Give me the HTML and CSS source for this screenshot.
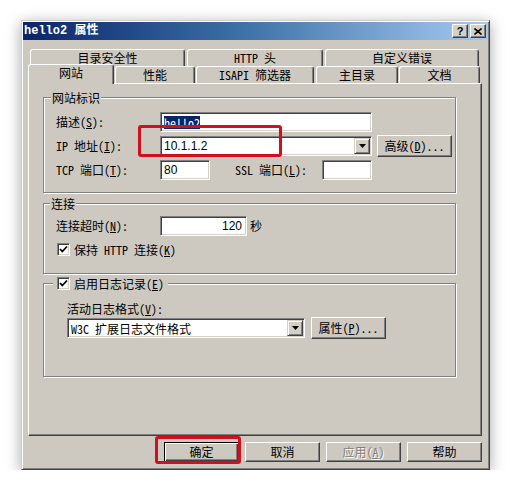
FILE: index.html
```html
<!DOCTYPE html>
<html lang="zh-CN">
<head>
<meta charset="utf-8">
<title>hello2 属性</title>
<link rel="stylesheet" href="styles.css">
</head>
<body>
<div class="win">
  <div class="titlebar">
    <span class="title-text">hello2 属性</span>
    <div class="caps">
      <span class="cap cap-help">?</span>
      <span class="cap cap-close"><svg width="8" height="7" viewBox="0 0 8 7"><path d="M0.5 0.5 L7.5 6.5 M7.5 0.5 L0.5 6.5" stroke="#000" stroke-width="1.6"/></svg></span>
    </div>
  </div>
  <div class="client">
    <div class="tabs">
      <div class="tabrow back">
        <div class="tab t-sec">目录安全性</div>
        <div class="tab t-http">HTTP 头</div>
        <div class="tab t-err">自定义错误</div>
      </div>
      <div class="tabrow front">
        <div class="tab sel t-site">网站</div>
        <div class="tab t-perf">性能</div>
        <div class="tab t-isapi">ISAPI 筛选器</div>
        <div class="tab t-home">主目录</div>
        <div class="tab t-doc">文档</div>
      </div>
    </div>
    <div class="panel">
      <div class="group g1">
        <div class="legend lg1">网站标识</div>
        <div class="frow first">
          <span class="lbl">描述(<u>S</u>):</span>
          <div class="field w-wide"><span class="hl">hello2</span></div>
        </div>
        <div class="frow">
          <span class="lbl">IP 地址(<u>I</u>):</span>
          <div class="field combo w-wide"><span class="num">10.1.1.2</span><span class="drop"><svg width="7" height="4" viewBox="0 0 7 4"><path d="M0 0 H7 L3.5 4 Z" fill="#000"/></svg></span></div>
          <div class="btn btn-adv">高级(<u>D</u>)...</div>
        </div>
        <div class="frow">
          <span class="lbl">TCP 端口(<u>T</u>):</span>
          <div class="field w-port"><span class="num">80</span></div>
          <span class="lbl-ssl">SSL 端口(<u>L</u>):</span>
          <div class="field w-port"></div>
        </div>
      </div>
      <div class="group g2">
        <div class="legend lg2">连接</div>
        <div class="frow first2">
          <span class="lbl">连接超时(<u>N</u>):</span>
          <div class="field w-timeout right"><span class="num">120</span></div>
          <span class="unit">秒</span>
        </div>
        <div class="crow">
          <span class="check"><svg width="9" height="9" viewBox="0 0 9 9"><path d="M1 4 L3.3 6.5 L8 1.5" fill="none" stroke="#000" stroke-width="1.8"/></svg></span>
          <span>保持 HTTP 连接(<u>K</u>)</span>
        </div>
      </div>
      <div class="group g3">
        <div class="legend lg3">
          <span class="check"><svg width="9" height="9" viewBox="0 0 9 9"><path d="M1 4 L3.3 6.5 L8 1.5" fill="none" stroke="#000" stroke-width="1.8"/></svg></span>
          <span>启用日志记录(<u>E</u>)</span>
        </div>
        <div class="sublabel">活动日志格式(<u>V</u>):</div>
        <div class="frow logrow">
          <div class="field combo w-log"><span>W3C 扩展日志文件格式</span><span class="drop"><svg width="7" height="4" viewBox="0 0 7 4"><path d="M0 0 H7 L3.5 4 Z" fill="#000"/></svg></span></div>
          <div class="btn btn-prop">属性(<u>P</u>)...</div>
        </div>
      </div>
    </div>
    <div class="buttons">
      <div class="btn dbtn default">确定</div>
      <div class="btn dbtn">取消</div>
      <div class="btn dbtn disabled">应用(<u>A</u>)</div>
      <div class="btn dbtn">帮助</div>
    </div>
  </div>
  <div class="redbox rb-ip"></div>
  <div class="redbox rb-ok"></div>
</div>
</body>
</html>
```
FILE: styles.css
```css
html, body {
  margin: 0;
  padding: 0;
  background: #ffffff;
}
body {
  font-family: "Noto Sans Mono CJK SC", "Noto Sans CJK SC", sans-serif;
  font-size: 12px;
  line-height: 14px;
  color: #000;
}
u { text-decoration: underline; text-underline-offset: 1px; }

.win {
  position: relative;
  box-sizing: border-box;
  margin: 20px 0 0 21px;
  width: 469px;
  height: 450px;
  padding: 1px;
  background: #cdc9c1;
  border: 1px solid;
  border-color: #d4d0c8 #404040 #404040 #d4d0c8;
  box-shadow: inset 1px 1px 0 #ffffff, inset -1px -1px 0 #808080, 0 3px 14px rgba(0,0,0,0.35);
}

.titlebar {
  height: 18px;
  display: flex;
  align-items: center;
  justify-content: space-between;
  padding: 0 2px 0 1px;
  background: linear-gradient(to right, #0a246a 0%, #3a6ea5 45%, #a6caf0 100%);
}
.title-text {
  font-family: "Liberation Mono", "Noto Sans CJK SC", monospace;
  font-weight: bold;
  font-size: 12px;
  color: #fff;
  line-height: 14px;
}
.caps { display: flex; gap: 2px; }
.cap {
  box-sizing: border-box;
  width: 16px;
  height: 14px;
  display: flex;
  align-items: center;
  justify-content: center;
  background: #d4d0c8;
  border: 1px solid;
  border-color: #ffffff #404040 #404040 #ffffff;
  box-shadow: inset -1px -1px 0 #808080;
  font-family: "Liberation Sans", sans-serif;
  font-weight: bold;
  font-size: 11px;
  line-height: 12px;
}

.client {
  padding: 9px 0 0 5px;
}

.tabs { width: 454px; }
.tabrow { display: flex; height: 17px; }
.tabrow.back { padding-left: 2px; }
.tab {
  box-sizing: border-box;
  height: 17px;
  border-top: 1px solid #ffffff;
  border-left: 1px solid #ffffff;
  border-right: 1px solid #404040;
  box-shadow: inset -1px 0 0 #808080;
  border-radius: 3px 3px 0 0;
  background: #cdc9c1;
  text-align: center;
  line-height: 16px;
}
.t-sec { width: 155px; }
.t-http { width: 136px; margin-left: 2px; }
.t-err { width: 154px; margin-left: 2px; }
.t-site { width: 86px; }
.t-perf { width: 80px; margin-left: 1px; }
.t-isapi { width: 118px; margin-left: 1px; }
.t-home { width: 82px; margin-left: 2px; }
.t-doc { width: 81px; margin-left: 1px; }
.tab.sel {
  position: relative;
  z-index: 2;
  height: 20px;
  margin-top: -2px;
  line-height: 15px;
}

.panel {
  box-sizing: border-box;
  width: 454px;
  height: 353px;
  padding: 13px 0 0 14px;
  border: 1px solid;
  border-color: #ffffff #404040 #404040 #ffffff;
  box-shadow: inset -1px -1px 0 #808080;
}

.group {
  box-sizing: border-box;
  width: 413px;
  border: 1px solid #808080;
  box-shadow: 1px 1px 0 #ffffff, inset 1px 1px 0 #ffffff;
}
.g1 { height: 96px; }
.g2 { height: 71px; margin-top: 10px; }
.g3 { height: 94px; margin-top: 9px; }

.legend {
  display: table;
  height: 13px;
  line-height: 13px;
  margin-top: -7px;
  padding: 0 1px;
  background: #cdc9c1;
}
.lg1 { margin-left: 7px; }
.lg2 { margin-left: 6px; }
.lg3 {
  display: flex;
  align-items: center;
  width: max-content;
  gap: 4px;
  margin-left: 9px;
  padding: 0 4px;
}

.frow {
  display: flex;
  align-items: center;
  height: 20px;
  padding-left: 12px;
  margin-top: 4px;
}
.frow.first { margin-top: 8px; }
.frow.first2 { margin-top: 6px; }
.lbl { width: 104px; flex: none; }
.lbl-ssl { width: 87px; margin-left: 25px; flex: none; }
.unit { margin-left: 3px; }

.field {
  box-sizing: border-box;
  height: 20px;
  flex: none;
  display: flex;
  align-items: center;
  padding: 0 2px 0 3px;
  background: #ffffff;
  border: 1px solid;
  border-color: #808080 #ffffff #ffffff #808080;
  box-shadow: inset 1px 1px 0 #404040, inset -1px -1px 0 #d4d0c8;
  line-height: 13px;
}
.field.right { justify-content: flex-end; padding-right: 4px; }
.w-wide { width: 212px; }
.w-port { width: 50px; }
.w-timeout { width: 87px; }
.w-log { width: 238px; }
.num {
  font-family: "Liberation Sans", sans-serif;
  font-size: 12px;
}
.hl {
  background: #0a246a;
  color: #ffffff;
}
.combo { padding-right: 1px; }
.drop {
  box-sizing: border-box;
  width: 16px;
  height: 16px;
  margin-left: auto;
  display: flex;
  align-items: center;
  justify-content: center;
  background: #d4d0c8;
  border: 1px solid;
  border-color: #d4d0c8 #404040 #404040 #d4d0c8;
  box-shadow: inset 1px 1px 0 #ffffff, inset -1px -1px 0 #808080;
}

.btn {
  box-sizing: border-box;
  flex: none;
  display: flex;
  align-items: center;
  justify-content: center;
  width: 75px;
  height: 22px;
  background: #cdc9c1;
  border: 1px solid;
  border-color: #ffffff #404040 #404040 #ffffff;
  box-shadow: inset -1px -1px 0 #808080;
}
.btn-adv { margin-left: 5px; }
.btn-prop { margin-left: 6px; }

.crow {
  display: flex;
  align-items: center;
  gap: 4px;
  height: 13px;
  margin-top: 7px;
  padding-left: 13px;
}
.check {
  box-sizing: border-box;
  width: 13px;
  height: 13px;
  flex: none;
  display: flex;
  align-items: center;
  justify-content: center;
  background: #ffffff;
  border: 1px solid;
  border-color: #808080 #ffffff #ffffff #808080;
  box-shadow: inset 1px 1px 0 #404040, inset -1px -1px 0 #d4d0c8;
}

.sublabel {
  margin-top: 12px;
  padding-left: 23px;
  height: 14px;
  line-height: 14px;
}
.logrow { margin-top: 2px; padding-left: 23px; }

.buttons {
  display: flex;
  justify-content: flex-end;
  gap: 6px;
  width: 454px;
  margin-top: 6px;
}
.dbtn { height: 20px; }
.dbtn.default {
  border-color: #000;
  box-shadow: inset 1px 1px 0 #ffffff, inset -1px -1px 0 #404040, inset -2px -2px 0 #808080;
}
.dbtn.disabled {
  color: #808080;
  text-shadow: 1px 1px 0 #ffffff;
}

.redbox {
  position: absolute;
  box-sizing: border-box;
  border: 3px solid #d0101c;
  border-radius: 3px;
  pointer-events: none;
}
.rb-ip { left: 116px; top: 104px; width: 144px; height: 32px; }
.rb-ok { left: 133px; top: 415px; width: 86px; height: 28px; }
```
